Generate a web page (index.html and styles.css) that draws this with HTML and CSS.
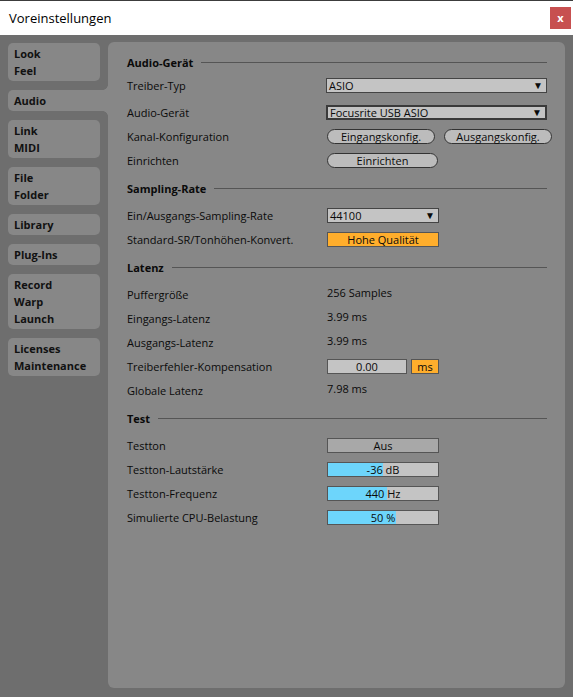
FILE: index.html
```html
<!DOCTYPE html>
<html lang="de">
<head>
    <meta charset="UTF-8">
    <meta name="viewport" content="width=device-width, initial-scale=1.0">
    <title>Voreinstellungen</title>
    <link rel="stylesheet" href="styles.css">
</head>
<body>
    <div class="titlebar">
        <span class="title">Voreinstellungen</span>
        <button class="close">x</button>
    </div>

    <div class="window">
        <nav class="tabs">
            <div class="tab">Look<br>Feel</div>
            <div class="tab active">Audio</div>
            <div class="tab">Link<br>MIDI</div>
            <div class="tab">File<br>Folder</div>
            <div class="tab">Library</div>
            <div class="tab">Plug-Ins</div>
            <div class="tab">Record<br>Warp<br>Launch</div>
            <div class="tab">Licenses<br>Maintenance</div>
        </nav>

        <main class="panel">
            <section class="section">
                <div class="section-head"><span>Audio-Gerät</span></div>
                <div class="row">
                    <span class="label">Treiber-Typ</span>
                    <div class="select wide">ASIO<span class="arrow">▼</span></div>
                </div>
                <div class="row row-gap">
                    <span class="label">Audio-Gerät</span>
                    <div class="select wide focused">Focusrite USB ASIO<span class="arrow">▼</span></div>
                </div>
                <div class="row">
                    <span class="label">Kanal-Konfiguration</span>
                    <div class="pills">
                        <div class="pill">Eingangskonfig.</div>
                        <div class="pill">Ausgangskonfig.</div>
                    </div>
                </div>
                <div class="row">
                    <span class="label">Einrichten</span>
                    <div class="pill single">Einrichten</div>
                </div>
            </section>

            <section class="section">
                <div class="section-head"><span>Sampling-Rate</span></div>
                <div class="row">
                    <span class="label">Ein/Ausgangs-Sampling-Rate</span>
                    <div class="select">44100<span class="arrow">▼</span></div>
                </div>
                <div class="row">
                    <span class="label">Standard-SR/Tonhöhen-Konvert.</span>
                    <div class="box orange">Hohe Qualität</div>
                </div>
            </section>

            <section class="section">
                <div class="section-head"><span>Latenz</span></div>
                <div class="row">
                    <span class="label">Puffergröße</span>
                    <span class="value">256 Samples</span>
                </div>
                <div class="row">
                    <span class="label">Eingangs-Latenz</span>
                    <span class="value">3.99 ms</span>
                </div>
                <div class="row">
                    <span class="label">Ausgangs-Latenz</span>
                    <span class="value">3.99 ms</span>
                </div>
                <div class="row">
                    <span class="label">Treiberfehler-Kompensation</span>
                    <div class="box number">0.00</div>
                    <div class="box orange unit">ms</div>
                </div>
                <div class="row">
                    <span class="label">Globale Latenz</span>
                    <span class="value">7.98 ms</span>
                </div>
            </section>

            <section class="section">
                <div class="section-head"><span>Test</span></div>
                <div class="row">
                    <span class="label">Testton</span>
                    <div class="box dark">Aus</div>
                </div>
                <div class="row">
                    <span class="label">Testton-Lautstärke</span>
                    <div class="box slider"><div class="fill" style="width: 50%"></div><span>-36 dB</span></div>
                </div>
                <div class="row">
                    <span class="label">Testton-Frequenz</span>
                    <div class="box slider"><div class="fill" style="width: 54%"></div><span>440 Hz</span></div>
                </div>
                <div class="row">
                    <span class="label">Simulierte CPU-Belastung</span>
                    <div class="box slider"><div class="fill" style="width: 62%"></div><span>50 %</span></div>
                </div>
            </section>
        </main>
    </div>
</body>
</html>
```

FILE: styles.css
```css
* {
    margin: 0;
    padding: 0;
    box-sizing: border-box;
}

body {
    font-family: "Open Sans", "Noto Sans", sans-serif;
    font-size: 11px;
    color: #0a0a0a;
    background-color: #6e6e6e;
    width: 573px;
    height: 697px;
    overflow: hidden;
}

/* window title */
.titlebar {
    height: 35px;
    background-color: #fff;
    border-top: 1px solid #3c3c3c;
    display: flex;
    align-items: center;
    justify-content: space-between;
    padding-left: 9px;
    padding-right: 2px;
}

.title {
    font-size: 13px;
    color: #000;
}

.close {
    width: 21px;
    height: 22px;
    border: none;
    background-color: #c75050;
    color: #fff;
    font-family: "Open Sans", sans-serif;
    font-weight: bold;
    font-size: 11px;
    line-height: 20px;
}

.window {
    display: flex;
    padding-top: 7px;
    height: 653px;
}

/* left tabs */
.tabs {
    width: 108px;
    padding-left: 8px;
    padding-top: 1px;
    display: flex;
    flex-direction: column;
    gap: 9px;
}

.tab {
    width: 92px;
    background-color: #878787;
    border-radius: 5px;
    padding: 2px 6px;
    line-height: 17px;
    font-weight: bold;
    color: #111;
}

.tab.active {
    width: 100px;
    border-radius: 5px 0 0 5px;
    position: relative;
}

.tab.active::before,
.tab.active::after {
    content: "";
    position: absolute;
    right: 0;
    width: 5px;
    height: 5px;
}

.tab.active::before {
    top: -5px;
    background: radial-gradient(circle at 0 0, transparent 4.5px, #878787 5px);
}

.tab.active::after {
    bottom: -5px;
    background: radial-gradient(circle at 0 100%, transparent 4.5px, #878787 5px);
}

/* main panel */
.panel {
    width: 457px;
    height: 646px;
    background-color: #878787;
    border-radius: 6px;
    padding: 8px 18px 0 19px;
}

.section + .section {
    margin-top: 4px;
}

.section-head {
    height: 24px;
    display: flex;
    align-items: center;
    gap: 8px;
    font-weight: bold;
    margin-bottom: 3px;
}

.section-head::after {
    content: "";
    flex: 1;
    height: 1px;
    background-color: #555;
}

.section:first-child .section-head {
    margin-bottom: -1px;
}

.row {
    height: 24px;
    display: flex;
    align-items: center;
}

.row-gap {
    margin-top: 3px;
}

.label {
    width: 200px;
    flex-shrink: 0;
}

.value {
    margin-bottom: 3px;
}

/* controls */
.select {
    width: 112px;
    height: 15px;
    background-color: #c4c4c4;
    border: 1px solid #444;
    padding-left: 2px;
    line-height: 13px;
    display: flex;
    justify-content: space-between;
}

.select.wide {
    width: 227px;
    margin-left: -1px;
}

.select.focused {
    border: 2px solid #3a3a3a;
    line-height: 11px;
}

.arrow {
    font-size: 10px;
    padding-right: 3px;
}

.pills {
    display: flex;
    gap: 9px;
}

.pill {
    width: 108px;
    height: 15px;
    border: 1px solid #333;
    border-radius: 8px;
    background-color: #bcbcbc;
    line-height: 13px;
    text-align: center;
}

.pill.single {
    width: 111px;
}

.box {
    width: 112px;
    height: 15px;
    border: 1px solid #555;
    background-color: #c4c4c4;
    line-height: 13px;
    text-align: center;
    position: relative;
}

.box.orange {
    background-color: #ffae2c;
}

.box.number {
    width: 80px;
}

.box.unit {
    width: 28px;
    margin-left: 4px;
}

.box.dark {
    background-color: #a8a8a8;
}

.slider .fill {
    position: absolute;
    left: 0;
    top: 0;
    bottom: 0;
    background-color: #6dd5fb;
}

.slider span {
    position: relative;
}
```
